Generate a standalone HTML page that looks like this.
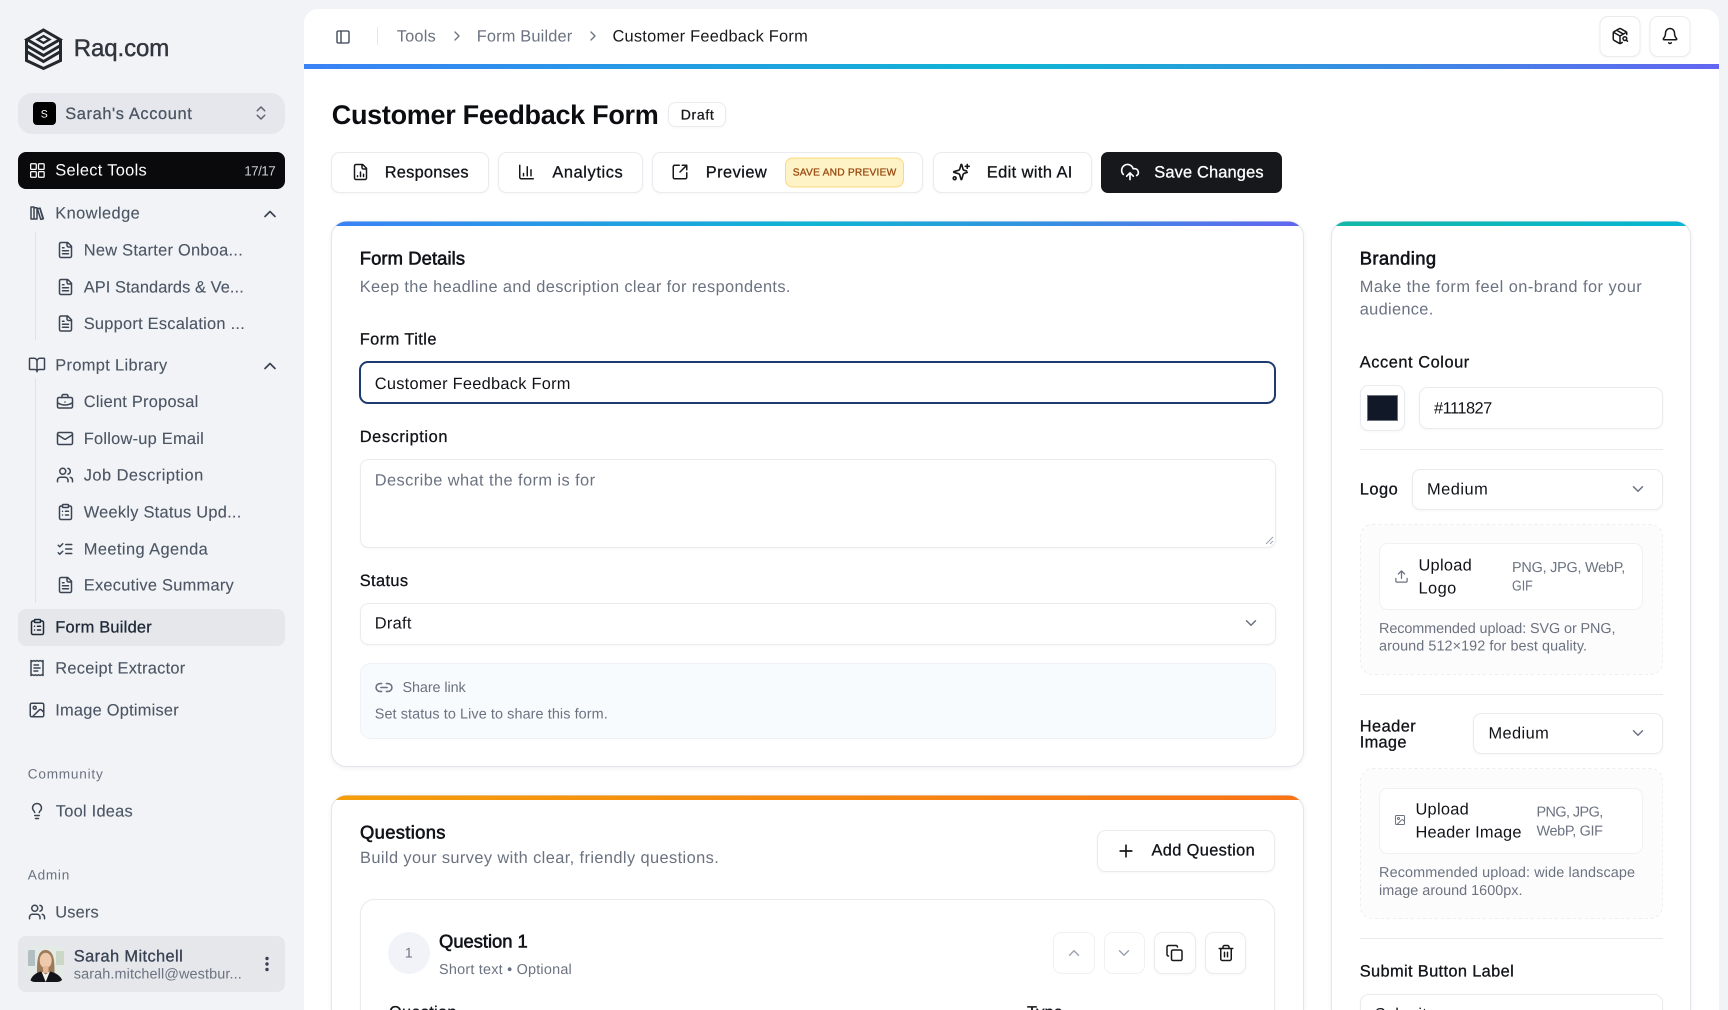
<!DOCTYPE html>
<html lang="en">
<head>
<meta charset="utf-8">
<title>Customer Feedback Form</title>
<style>
html,body{margin:0;padding:0;width:1728px;height:1010px;overflow:hidden;background:#f1f3f6}
svg{display:block;position:absolute;left:0;top:0;overflow:hidden}
text{font-family:"Liberation Sans",sans-serif;text-rendering:geometricPrecision;white-space:pre;transform:translate(-.25px,-.4px)}
.f16{font-size:16.4px}.f14{font-size:14.4px}.f13{font-size:13.6px}.f18{font-size:18.4px}
.m{stroke:currentColor;stroke-width:.3px}
.h{stroke:currentColor;stroke-width:.6px}
.sb{fill:#4b5563;color:#4b5563}
.sb text{stroke:#4b5563;stroke-width:.12px}
.dk{fill:#111318;color:#111318}
.gr{fill:#6b7280;color:#6b7280}
.box{fill:#fff;stroke:#e9ebef;stroke-width:1;filter:drop-shadow(0 1px 1px rgba(17,24,39,.04))}
.up{fill:#fff;stroke:#f0f1f4;stroke-width:1}
.card{fill:#fff;stroke:#e3e5ea;stroke-width:1;filter:drop-shadow(0 1px 2px rgba(17,24,39,.07))}
.ln{stroke:#e8eaee;stroke-width:1}
.ic{fill:none;stroke:currentColor;stroke-width:2;stroke-linecap:round;stroke-linejoin:round}
</style>
</head>
<body>
<svg xmlns="http://www.w3.org/2000/svg" width="1728" height="1010" viewBox="0 0 1728 1010">
<defs>
<linearGradient id="gTop" x1="0" x2="1" y1="0" y2="0"><stop offset="0" stop-color="#3b82f6"/><stop offset=".5" stop-color="#0fb5d3"/><stop offset="1" stop-color="#6366f1"/></linearGradient>
<linearGradient id="gTeal" x1="0" x2="1" y1="0" y2="0"><stop offset="0" stop-color="#14b8a6"/><stop offset="1" stop-color="#06b6d4"/></linearGradient>
<linearGradient id="gOr" x1="0" x2="1" y1="0" y2="0"><stop offset="0" stop-color="#f59e0b"/><stop offset="1" stop-color="#f97316"/></linearGradient>
<clipPath id="c1"><rect x="331.500" y="221.500" width="972" height="100" rx="15"/></clipPath>
<clipPath id="c2"><rect x="1331.500" y="221.500" width="359" height="100" rx="15"/></clipPath>
<clipPath id="c3"><rect x="331.500" y="795.500" width="972" height="100" rx="15"/></clipPath>
<clipPath id="cAv"><rect x="28" y="946" width="36" height="36" rx="7"/></clipPath>
<symbol id="panel" viewBox="0 0 24 24"><g class="ic"><rect x="3" y="3" width="18" height="18" rx="2"/><path d="M9 3v18"/></g></symbol>
<symbol id="cr" viewBox="0 0 24 24"><path class="ic" d="m9 18 6-6-6-6"/></symbol>
<symbol id="cu" viewBox="0 0 24 24"><path class="ic" d="m18 15-6-6-6 6"/></symbol>
<symbol id="cd" viewBox="0 0 24 24"><path class="ic" d="m6 9 6 6 6-6"/></symbol>
<symbol id="cud" viewBox="0 0 24 24"><path class="ic" d="m7 15 5 5 5-5M7 9l5-5 5 5"/></symbol>
<symbol id="grid" viewBox="0 0 24 24"><g class="ic" style="stroke-width:1.700"><rect x="3" y="3" width="7.500" height="7.500" rx="1.200"/><rect x="13.500" y="3" width="7.500" height="7.500" rx="1.200"/><rect x="13.500" y="13.500" width="7.500" height="7.500" rx="1.200"/><rect x="3" y="13.500" width="7.500" height="7.500" rx="1.200"/></g></symbol>
<symbol id="lib" viewBox="0 0 24 24"><path class="ic" d="m16 6 4 14M12 6v14M8 8v12M4 4v16M4 20h4M8 20h4M4 4h4v4M8 5h4v15M12.500 6.500l3.500-1 4.500 14-3.500 1z"/></symbol>
<symbol id="file" viewBox="0 0 24 24"><path class="ic" d="M15 2H6a2 2 0 0 0-2 2v16a2 2 0 0 0 2 2h12a2 2 0 0 0 2-2V7ZM14 2v4a2 2 0 0 0 2 2h4M10 9H8M16 13H8M16 17H8"/></symbol>
<symbol id="book" viewBox="0 0 24 24"><path class="ic" d="M12 7v14M3 18a1 1 0 0 1-1-1V4a1 1 0 0 1 1-1h5a4 4 0 0 1 4 4 4 4 0 0 1 4-4h5a1 1 0 0 1 1 1v13a1 1 0 0 1-1 1h-6a3 3 0 0 0-3 3 3 3 0 0 0-3-3z"/></symbol>
<symbol id="brief" viewBox="0 0 24 24"><g class="ic"><path d="M12 12h.01M16 6V4a2 2 0 0 0-2-2h-4a2 2 0 0 0-2 2v2M22 13a18.150 18.150 0 0 1-20 0"/><rect x="2" y="6" width="20" height="14" rx="2"/></g></symbol>
<symbol id="mail" viewBox="0 0 24 24"><g class="ic"><path d="m22 7-8.991 5.727a2 2 0 0 1-2.009 0L2 7"/><rect x="2" y="4" width="20" height="16" rx="2"/></g></symbol>
<symbol id="users" viewBox="0 0 24 24"><g class="ic"><path d="M16 21v-2a4 4 0 0 0-4-4H6a4 4 0 0 0-4 4v2M22 21v-2a4 4 0 0 0-3-3.870M16 3.130a4 4 0 0 1 0 7.750"/><circle cx="9" cy="7" r="4"/></g></symbol>
<symbol id="clip" viewBox="0 0 24 24"><g class="ic"><rect x="8" y="2" width="8" height="4" rx="1"/><path d="M16 4h2a2 2 0 0 1 2 2v14a2 2 0 0 1-2 2H6a2 2 0 0 1-2-2V6a2 2 0 0 1 2-2h2M12 11h4M12 16h4M8 11h.01M8 16h.01"/></g></symbol>
<symbol id="checks" viewBox="0 0 24 24"><path class="ic" d="m3 17 2 2 4-4M3 7l2 2 4-4M13 6h8M13 12h8M13 18h8"/></symbol>
<symbol id="rcpt" viewBox="0 0 24 24"><path class="ic" d="M4 2v20l2-1 2 1 2-1 2 1 2-1 2 1 2-1 2 1V2l-2 1-2-1-2 1-2-1-2 1-2-1-2 1ZM14 8H8M16 12H8M13 16H8"/></symbol>
<symbol id="img" viewBox="0 0 24 24"><g class="ic"><rect x="3" y="3" width="18" height="18" rx="2"/><circle cx="9" cy="9" r="2"/><path d="m21 15-3.086-3.086a2 2 0 0 0-2.828 0L6 21"/></g></symbol>
<symbol id="bulb" viewBox="0 0 24 24"><path class="ic" d="M15 14c.2-1 .7-1.700 1.500-2.500 1-.9 1.500-2.200 1.500-3.500A6 6 0 0 0 6 8c0 1 .2 2.200 1.500 3.500.7.7 1.300 1.500 1.500 2.500M9 18h6M10 22h4"/></symbol>
<symbol id="fchart" viewBox="0 0 24 24"><path class="ic" d="M15 2H6a2 2 0 0 0-2 2v16a2 2 0 0 0 2 2h12a2 2 0 0 0 2-2V7ZM14 2v4a2 2 0 0 0 2 2h4M8 18v-1M12 18v-6M16 18v-3"/></symbol>
<symbol id="chart" viewBox="0 0 24 24"><path class="ic" d="M3 3v16a2 2 0 0 0 2 2h16M18 17V9M13 17V5M8 17v-3"/></symbol>
<symbol id="ext" viewBox="0 0 24 24"><path class="ic" d="M21 13v6a2 2 0 0 1-2 2H5a2 2 0 0 1-2-2V5a2 2 0 0 1 2-2h6M21 3l-9 9M15 3h6v6"/></symbol>
<symbol id="spark" viewBox="0 0 24 24"><g class="ic"><path d="M10.500 15.500A2 2 0 0 0 9 14l-5.500-1.600a.5.5 0 0 1 0-.9L9 10a2 2 0 0 0 1.500-1.500L12 3.200a.5.5 0 0 1 .9 0L14.400 8.500A2 2 0 0 0 16 10l2.600.7"/><path d="M19.500 12.400 16 13.600a2 2 0 0 0-1.500 1.500l-1.600 5.700a.5.5 0 0 1-.9 0l-1.500-5.300M19.500 3v4.500M21.800 5.200h-4.600"/><circle cx="4.400" cy="19.500" r="1.700"/></g></symbol>
<symbol id="cloud" viewBox="0 0 24 24"><path class="ic" d="M12 13v8M4 14.899A7 7 0 1 1 15.710 8h1.790a4.500 4.500 0 0 1 2.500 8.242M8 17l4-4 4 4"/></symbol>
<symbol id="bell" viewBox="0 0 24 24"><path class="ic" d="M10.268 21a2 2 0 0 0 3.464 0M3.262 15.326A1 1 0 0 0 4 17h16a1 1 0 0 0 .74-1.673C19.410 13.956 18 12.499 18 8A6 6 0 0 0 6 8c0 4.499-1.411 5.956-2.738 7.326"/></symbol>
<symbol id="pkg" viewBox="0 0 24 24"><g class="ic"><path d="M21 10V8a2 2 0 0 0-1-1.730l-7-4a2 2 0 0 0-2 0l-7 4A2 2 0 0 0 3 8v8a2 2 0 0 0 1 1.730l7 4a2 2 0 0 0 2 0l2-1.140M7.500 4.270l9 5.150M3.290 7 12 12l8.710-5M12 22V12M20.270 17.270 22 19"/><circle cx="18.500" cy="15.500" r="2.500"/></g></symbol>
<symbol id="link" viewBox="0 0 24 24"><path class="ic" d="M9 17H7A5 5 0 0 1 7 7h2M15 7h2a5 5 0 1 1 0 10h-2M8 12h8"/></symbol>
<symbol id="upl" viewBox="0 0 24 24"><path class="ic" d="M21 15v4a2 2 0 0 1-2 2H5a2 2 0 0 1-2-2v-4M17 8l-5-5-5 5M12 3v12"/></symbol>
<symbol id="copy" viewBox="0 0 24 24"><g class="ic"><rect x="8" y="8" width="14" height="14" rx="2"/><path d="M4 16c-1.100 0-2-.9-2-2V4c0-1.100.9-2 2-2h10c1.100 0 2 .9 2 2"/></g></symbol>
<symbol id="trash" viewBox="0 0 24 24"><path class="ic" d="M3 6h18M19 6v14c0 1-1 2-2 2H7c-1 0-2-1-2-2V6M8 6V4c0-1 1-2 2-2h4c1 0 2 1 2 2v2M10 11v6M14 11v6"/></symbol>
<symbol id="plus" viewBox="0 0 24 24"><path class="ic" d="M5 12h14M12 5v14"/></symbol>
</defs>

<!-- Sidebar -->
<rect width="1728" height="1010" fill="#f1f3f6"/>
<g fill="none" stroke="#23272e" stroke-width="3" stroke-linejoin="miter">
<path d="M43.500 30 60 39.500 43.500 49 27 39.500Z"/>
<path d="M43.500 36 49.500 39.500 43.500 43 37.500 39.500Z" stroke-width="2.200"/>
<path d="M26.500 39.500V45.500L43.500 55.500 60.500 45.500V39.500"/>
<path d="M26.500 45.500V51.500L43.500 61.500 60.500 51.500V45.500"/>
<path d="M26.500 51.500V60.500L43.500 68.500 60.500 60.500V51.500"/>
</g>
<text x="74" y="56.500" font-size="24" style="fill:#30353e;stroke:#30353e;stroke-width:.45px" textLength="95.500">Raq.com</text>

<rect x="18" y="93" width="267" height="41" rx="14" fill="#e5e7ec"/>
<rect x="33" y="102" width="23" height="23" rx="4" fill="#000"/>
<text x="44.500" y="118" font-size="10.500" text-anchor="middle" fill="#fff">S</text>
<g class="f16 sb"><text x="65.500" y="119.500" textLength="126.500" style="stroke-width:.28px">Sarah's Account</text></g>
<use href="#cud" x="252" y="104" width="18" height="18" style="color:#5b6470"/>

<rect x="18" y="152" width="267" height="37" rx="8" fill="#0a0a0c"/>
<use href="#grid" x="28.400" y="161.500" width="18" height="18" style="color:#fff"/>
<text x="55.500" y="176" class="f16" fill="#fff" textLength="91.500">Select Tools</text>
<text x="244.500" y="175.700" font-size="13.500" fill="#c9ccd2" textLength="31.500">17/17</text>

<path d="M35.500 232V340M35.500 378V603" stroke="#dfe2e7" stroke-width="1" fill="none"/>

<g style="color:#3b4452">
<use href="#lib" x="28" y="204" width="18" height="18"/>
<use href="#cu" x="260" y="204" width="20" height="20" style="color:#374151"/>
<use href="#file" x="56.500" y="241" width="18" height="18"/>
<use href="#file" x="56.500" y="278" width="18" height="18"/>
<use href="#file" x="56.500" y="314.500" width="18" height="18"/>
<use href="#book" x="28" y="356" width="18" height="18"/>
<use href="#cu" x="260" y="356" width="20" height="20" style="color:#374151"/>
<use href="#brief" x="56" y="393" width="18" height="18"/>
<use href="#mail" x="56" y="429.500" width="18" height="18"/>
<use href="#users" x="56" y="466" width="18" height="18"/>
<use href="#clip" x="56.500" y="503" width="18" height="18"/>
<use href="#checks" x="56" y="540" width="18" height="18"/>
<use href="#file" x="56.500" y="576" width="18" height="18"/>
<use href="#rcpt" x="28" y="659" width="18" height="18"/>
<use href="#img" x="28" y="701" width="18" height="18"/>
<use href="#bulb" x="28" y="802" width="18" height="18"/>
<use href="#users" x="28" y="903" width="18" height="18"/>
</g>
<g class="f16 sb">
<text x="55.500" y="218.700" textLength="84.500">Knowledge</text>
<text x="84" y="256" textLength="159">New Starter Onboa...</text>
<text x="84" y="293" textLength="160">API Standards &amp; Ve...</text>
<text x="84" y="329.500" textLength="161">Support Escalation ...</text>
<text x="55.500" y="371" textLength="112">Prompt Library</text>
<text x="84" y="407.500" textLength="114.500">Client Proposal</text>
<text x="84" y="444.500" textLength="120">Follow-up Email</text>
<text x="84" y="481" textLength="119.500">Job Description</text>
<text x="84" y="518" textLength="157.500">Weekly Status Upd...</text>
<text x="84" y="555" textLength="124">Meeting Agenda</text>
<text x="84" y="591" textLength="150">Executive Summary</text>
<text x="55.500" y="674" textLength="130">Receipt Extractor</text>
<text x="55.500" y="716" textLength="123.500">Image Optimiser</text>
<text x="56" y="817" textLength="77">Tool Ideas</text>
<text x="55.500" y="917.700" textLength="43.500">Users</text>
</g>
<rect x="18" y="609" width="267" height="37" rx="8" fill="#e5e7eb"/>
<use href="#clip" x="28.500" y="618" width="18" height="18" style="color:#1f2937"/>
<text x="55.500" y="632.700" class="f16 m" style="fill:#1f2937;color:#1f2937" textLength="96.500">Form Builder</text>
<text x="28" y="779" class="f13" fill="#6b7280" textLength="75">Community</text>
<text x="28" y="880" class="f13" fill="#6b7280" textLength="41.500">Admin</text>

<rect x="18" y="936" width="267" height="56" rx="8" fill="#e5e7eb"/>
<g clip-path="url(#cAv)">
<rect x="28" y="946" width="36" height="36" fill="#e4eae6"/>
<rect x="28" y="950" width="7" height="16" fill="#b2bfc2"/>
<rect x="56" y="951" width="8" height="14" fill="#cbd8c6"/>
<path d="M37 975c0-7 0-13 1-17 1-5 3.500-8 7.500-8s7 3 8 8c1 4 1 10 1 17z" fill="#9c7a58"/>
<ellipse cx="45.700" cy="960.500" rx="6" ry="7.800" fill="#efc9ac"/>
<rect x="43" y="966" width="5.500" height="7" fill="#e6b899"/>
<path d="M30 984c0-7 5-11 11-12.500l4.700 4 4.700-4c6 1.500 12.600 5.500 12.600 12.500z" fill="#12141a"/>
<path d="M41.500 971.500l4.200 10.500 4.200-10.500-4.200 3z" fill="#f6f2ec"/>
</g>
<text x="74" y="961.700" class="f16 m" style="fill:#374151;color:#374151" textLength="109">Sarah Mitchell</text>
<text x="74" y="979" class="f14" fill="#6b7280" textLength="168">sarah.mitchell@westbur...</text>
<circle cx="267" cy="958.500" r="1.700" fill="#374151"/><circle cx="267" cy="964" r="1.700" fill="#374151"/><circle cx="267" cy="969.500" r="1.700" fill="#374151"/>

<!-- Main panel -->
<path d="M304 1010V23a14 14 0 0 1 14-14H1705a14 14 0 0 1 14 14V1010" fill="#fff"/>
<rect x="304" y="64" width="1415" height="5" fill="url(#gTop)"/>

<use href="#panel" x="335" y="29" width="16" height="16" style="color:#374151"/>
<path d="M377.500 27V45" stroke="#e5e7eb"/>
<g class="f16 gr">
<text x="397" y="42" textLength="39">Tools</text>
<text x="477" y="42" textLength="95.500">Form Builder</text>
<use href="#cr" x="449" y="28" width="16" height="16"/>
<use href="#cr" x="585" y="28" width="16" height="16"/>
</g>
<text x="612.700" y="42" class="f16" fill="#18181b" textLength="195.300">Customer Feedback Form</text>

<rect x="1600" y="16.500" width="40" height="40" rx="8" class="box"/>
<rect x="1650" y="16.500" width="40" height="40" rx="8" class="box"/>
<use href="#pkg" x="1611" y="27" width="18" height="18" style="color:#18181b"/>
<use href="#bell" x="1661" y="27" width="18" height="18" style="color:#18181b"/>

<text x="332" y="124.300" font-size="27" font-weight="bold" fill="#0c0d10" textLength="327">Customer Feedback Form</text>
<rect x="668.500" y="102.500" width="57" height="24" rx="7" class="box"/>
<text x="681" y="120" font-size="14" class="m" style="fill:#18181b;color:#18181b" textLength="33">Draft</text>

<rect x="331.500" y="152.500" width="157" height="40" rx="8" class="box"/>
<rect x="498.500" y="152.500" width="144" height="40" rx="8" class="box"/>
<rect x="652.500" y="152.500" width="270" height="40" rx="8" class="box"/>
<rect x="933.500" y="152.500" width="158" height="40" rx="8" class="box"/>
<rect x="1101" y="152" width="181" height="41" rx="7" fill="#17181c"/>
<rect x="785.500" y="158" width="118" height="29" rx="7" fill="#fef3c7" stroke="#fcd879"/>
<g style="color:#18181b">
<use href="#fchart" x="351.500" y="163" width="18" height="18"/>
<use href="#chart" x="517.500" y="163" width="18" height="18"/>
<use href="#ext" x="671" y="163" width="18" height="18"/>
<use href="#spark" x="951" y="162" width="20" height="20"/>
</g>
<use href="#cloud" x="1120" y="162" width="20" height="20" style="color:#fff"/>
<g class="f16 dk m">
<text x="385" y="178" textLength="83.800">Responses</text>
<text x="552.600" y="178" textLength="70.400">Analytics</text>
<text x="706" y="178" textLength="61">Preview</text>
<text x="987" y="178" textLength="85.600">Edit with AI</text>
</g>
<text x="1154.500" y="178" class="f16 m" style="fill:#fff;color:#fff" textLength="109.300">Save Changes</text>
<text x="793" y="175.700" font-size="10.200" style="fill:#9a4a10;stroke:#9a4a10;stroke-width:.3px" textLength="103.500">SAVE AND PREVIEW</text>

<!-- Form Details card -->
<rect x="331.500" y="221.500" width="972" height="545" rx="15" class="card"/>
<rect x="331" y="221.500" width="973" height="4.500" fill="url(#gTop)" clip-path="url(#c1)"/>
<text x="360" y="265" class="f18 h dk" textLength="105.300">Form Details</text>
<text x="360" y="292.300" class="f16" fill="#6b7280" textLength="430.700">Keep the headline and description clear for respondents.</text>
<g class="f16 dk m">
<text x="360" y="345" textLength="76.700">Form Title</text>
<text x="360" y="442.300" textLength="87.700">Description</text>
<text x="360" y="586.300" textLength="48.300">Status</text>
</g>
<rect x="360" y="362" width="915" height="41" rx="8" fill="#fff" stroke="#1e3a6e" stroke-width="2"/>
<text x="375" y="389.300" class="f16" fill="#111318" textLength="195.700">Customer Feedback Form</text>
<rect x="360.500" y="459.500" width="915" height="88" rx="8" class="box"/>
<text x="375" y="486" class="f16" fill="#6b7280" textLength="220.300">Describe what the form is for</text>
<path d="M1266 544 1273 537M1270 544 1273 541" stroke="#9ca3af" stroke-width="1" fill="none"/>
<rect x="360.500" y="603.500" width="915" height="41" rx="8" class="box"/>
<text x="375" y="629" class="f16" fill="#111318" textLength="36.700">Draft</text>
<use href="#cd" x="1242" y="614" width="18" height="18" style="color:#6b7280"/>
<rect x="360.500" y="663.500" width="915" height="75" rx="10" fill="#f8fbfd" stroke="#eef2f6"/>
<use href="#link" x="374.500" y="678" width="19" height="19" style="color:#6b7280"/>
<text x="402.700" y="692.300" class="f14" fill="#6b7280" textLength="63.300">Share link</text>
<text x="375" y="719" class="f14" fill="#6b7280" textLength="233">Set status to Live to share this form.</text>

<!-- Questions card -->
<path d="M331.500 1010V810.500a15 15 0 0 1 15-15H1288.500a15 15 0 0 1 15 15V1010" class="card"/>
<rect x="331" y="795.500" width="973" height="4.500" fill="url(#gOr)" clip-path="url(#c3)"/>
<text x="360.300" y="839" class="f18 h dk" textLength="85.400">Questions</text>
<text x="360.300" y="863.300" class="f16" fill="#6b7280" textLength="358.700">Build your survey with clear, friendly questions.</text>
<rect x="1097.500" y="830.500" width="177" height="41" rx="8" class="box"/>
<use href="#plus" x="1116" y="841" width="20" height="20" style="color:#18181b"/>
<text x="1151.700" y="856" class="f16 dk m" textLength="103.300">Add Question</text>
<path d="M360.500 1010V913.500a14 14 0 0 1 14-14H1260.500a14 14 0 0 1 14 14V1010" class="box"/>
<circle cx="409" cy="953" r="21" fill="#f1f3f8"/>
<text x="409" y="958" font-size="14" text-anchor="middle" fill="#6b7280">1</text>
<text x="439.300" y="948" class="f18 dk h" textLength="88.700">Question 1</text>
<text x="439.300" y="974.300" class="f14" fill="#6b7280" textLength="132.700">Short text • Optional</text>
<rect x="1053.500" y="932.500" width="41" height="41" rx="8" fill="#fff" stroke="#f0f1f4"/>
<rect x="1104.500" y="932.500" width="40" height="41" rx="8" fill="#fff" stroke="#f0f1f4"/>
<rect x="1154.500" y="932.500" width="41" height="41" rx="8" class="box"/>
<rect x="1205.500" y="932.500" width="40" height="41" rx="8" class="box"/>
<use href="#cu" x="1065" y="944" width="18" height="18" style="color:#9ca3af"/>
<use href="#cd" x="1115" y="944" width="18" height="18" style="color:#9ca3af"/>
<use href="#copy" x="1165.500" y="944" width="18" height="18" style="color:#18181b"/>
<use href="#trash" x="1217" y="944" width="18" height="18" style="color:#18181b"/>
<g class="f16 dk m">
<text x="389.300" y="1018" textLength="67.400">Question</text>
<text x="1027.300" y="1018" textLength="35.700">Type</text>
</g>

<!-- Branding card -->
<path d="M1331.500 1010V236.500a15 15 0 0 1 15-15H1675.500a15 15 0 0 1 15 15V1010" class="card"/>
<rect x="1331" y="221.500" width="360" height="4.500" fill="url(#gTeal)" clip-path="url(#c2)"/>
<text x="1360" y="265" class="f18 dk h" textLength="76.300">Branding</text>
<text x="1360" y="292.300" class="f16" fill="#6b7280" textLength="282">Make the form feel on-brand for your</text>
<text x="1360" y="315" class="f16" fill="#6b7280" textLength="73.500">audience.</text>
<text x="1360" y="368" class="f16 dk m" textLength="109.500">Accent Colour</text>
<rect x="1360.500" y="385.500" width="44" height="45" rx="8" class="box"/>
<rect x="1367.500" y="395.500" width="30" height="25" fill="#111827" stroke="#6b7280" stroke-width="1"/>
<rect x="1419.500" y="387.500" width="243" height="41" rx="8" class="box"/>
<text x="1434.300" y="414" class="f16" fill="#111318" textLength="58.200">#111827</text>
<path d="M1360 449.500H1663" class="ln"/>
<text x="1360" y="495" class="f16 dk m" textLength="38">Logo</text>
<rect x="1412.500" y="469.500" width="250" height="40" rx="8" class="box"/>
<text x="1427.300" y="495" class="f16" fill="#111318" textLength="60.700">Medium</text>
<use href="#cd" x="1629" y="480" width="18" height="18" style="color:#6b7280"/>
<rect x="1360.500" y="524.500" width="302" height="150" rx="12" fill="#fcfcfd" stroke="#eceef1" stroke-dasharray="3 3"/>
<rect x="1379.500" y="543.500" width="263" height="66" rx="8" class="up"/>
<use href="#upl" x="1394" y="569" width="15" height="15" style="color:#6b7280"/>
<g class="f16" fill="#111318">
<text x="1418.700" y="571" textLength="53.300">Upload</text>
<text x="1418.700" y="594" textLength="37.800">Logo</text>
</g>
<g class="f14" fill="#6b7280">
<text x="1512.300" y="572.300" textLength="113.200">PNG, JPG, WebP,</text>
<text x="1512.300" y="591" textLength="20.700" lengthAdjust="spacingAndGlyphs">GIF</text>
<text x="1379.300" y="633.300" textLength="236.400">Recommended upload: SVG or PNG,</text>
<text x="1379.300" y="651" textLength="208">around 512×192 for best quality.</text>
</g>
<path d="M1360 694.500H1663" class="ln"/>
<g class="f16 dk m">
<text x="1360" y="732" textLength="56">Header</text>
<text x="1360" y="748" textLength="46.700">Image</text>
</g>
<rect x="1473.500" y="713.500" width="189" height="40" rx="8" class="box"/>
<text x="1488.700" y="739" class="f16" fill="#111318" textLength="60.300">Medium</text>
<use href="#cd" x="1629" y="724" width="18" height="18" style="color:#6b7280"/>
<rect x="1360.500" y="768.500" width="302" height="150" rx="12" fill="#fcfcfd" stroke="#eceef1" stroke-dasharray="3 3"/>
<rect x="1379.500" y="788.500" width="263" height="65" rx="8" class="up"/>
<use href="#img" x="1394" y="814" width="12" height="12" style="color:#6b7280"/>
<g class="f16" fill="#111318">
<text x="1415.700" y="815" textLength="53.300">Upload</text>
<text x="1415.700" y="837.700" textLength="106">Header Image</text>
</g>
<g class="f14" fill="#6b7280">
<text x="1536.700" y="816.700" textLength="66.800">PNG, JPG,</text>
<text x="1536.700" y="835.700" textLength="66.500">WebP, GIF</text>
<text x="1379.300" y="877.300" textLength="256">Recommended upload: wide landscape</text>
<text x="1379.300" y="895.300" textLength="143.400">image around 1600px.</text>
</g>
<path d="M1360 938.500H1663" class="ln"/>
<text x="1360" y="977" class="f16 dk m" textLength="154">Submit Button Label</text>
<path d="M1360.500 1010V1002.500a8 8 0 0 1 8-8H1654.500a8 8 0 0 1 8 8V1010" class="box"/>
<text x="1375" y="1020" class="f16" fill="#111318" textLength="52">Submit</text>
</svg>
</body>
</html>
